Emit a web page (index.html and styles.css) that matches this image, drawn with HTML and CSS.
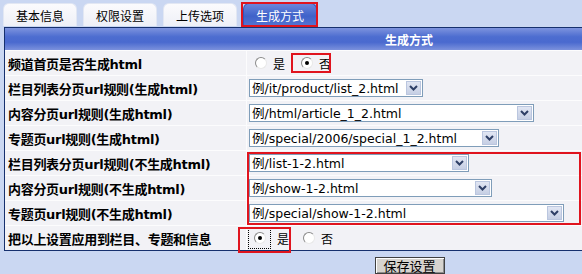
FILE: index.html
```html
<!DOCTYPE html>
<html lang="zh-cn">
<head>
    <meta charset="UTF-8">
    <title>生成方式</title>
    <link rel="stylesheet" href="styles.css">
</head>
<body>
    <div class="page">
        <ul class="tabs">
            <li>基本信息</li>
            <li>权限设置</li>
            <li>上传选项</li>
            <li class="on">生成方式</li>
        </ul>
        <table class="form">
            <tr class="head"><th colspan="2">生成方式</th></tr>
            <tr>
                <td class="lbl">频道首页是否生成html</td>
                <td class="val">
                    <span class="radios">
                        <label><input type="radio" name="idx"> 是</label>
                        <label><input type="radio" name="idx" checked> 否</label>
                    </span>
                </td>
            </tr>
            <tr>
                <td class="lbl">栏目列表分页url规则(生成html)</td>
                <td class="val"><span class="sel w174"><select><option>例/it/product/list_2.html</option></select><i class="arrow"><svg width="15" height="14" viewBox="0 0 15 14"><polyline points="4,5 7.5,8.5 11,5" fill="none" stroke="#2e3f66" stroke-width="2"/></svg></i></span></td>
            </tr>
            <tr>
                <td class="lbl">内容分页url规则(生成html)</td>
                <td class="val"><span class="sel w285"><select><option>例/html/article_1_2.html</option></select><i class="arrow"><svg width="15" height="14" viewBox="0 0 15 14"><polyline points="4,5 7.5,8.5 11,5" fill="none" stroke="#2e3f66" stroke-width="2"/></svg></i></span></td>
            </tr>
            <tr>
                <td class="lbl">专题页url规则(生成html)</td>
                <td class="val"><span class="sel w250"><select><option>例/special/2006/special_1_2.html</option></select><i class="arrow"><svg width="15" height="14" viewBox="0 0 15 14"><polyline points="4,5 7.5,8.5 11,5" fill="none" stroke="#2e3f66" stroke-width="2"/></svg></i></span></td>
            </tr>
            <tr>
                <td class="lbl">栏目列表分页url规则(不生成html)</td>
                <td class="val"><span class="sel w220"><select><option>例/list-1-2.html</option></select><i class="arrow"><svg width="15" height="14" viewBox="0 0 15 14"><polyline points="4,5 7.5,8.5 11,5" fill="none" stroke="#2e3f66" stroke-width="2"/></svg></i></span></td>
            </tr>
            <tr>
                <td class="lbl">内容分页url规则(不生成html)</td>
                <td class="val"><span class="sel w243"><select><option>例/show-1-2.html</option></select><i class="arrow"><svg width="15" height="14" viewBox="0 0 15 14"><polyline points="4,5 7.5,8.5 11,5" fill="none" stroke="#2e3f66" stroke-width="2"/></svg></i></span></td>
            </tr>
            <tr>
                <td class="lbl">专题页url规则(不生成html)</td>
                <td class="val"><span class="sel w315"><select><option>例/special/show-1-2.html</option></select><i class="arrow"><svg width="15" height="14" viewBox="0 0 15 14"><polyline points="4,5 7.5,8.5 11,5" fill="none" stroke="#2e3f66" stroke-width="2"/></svg></i></span></td>
            </tr>
            <tr>
                <td class="lbl">把以上设置应用到栏目、专题和信息</td>
                <td class="val">
                    <span class="radios apply">
                        <label><span class="focus"><input type="radio" name="apply" checked></span> 是</label>
                        <label><input type="radio" name="apply"> 否</label>
                    </span>
                </td>
            </tr>
        </table>
        <div class="actions"><button type="button" class="btn-save">保存设置</button></div>

        <!-- 标注框 -->
        <div class="mark mark-tab"></div>
        <div class="mark mark-no"></div>
        <div class="mark mark-rules"></div>
        <div class="mark mark-yes"></div>
    </div>
</body>
</html>
```

FILE: styles.css
```css
body {
    margin: 0;
    background: #cad7f2;
    overflow: hidden;
    font-family: "DejaVu Sans", "Noto Sans CJK SC", sans-serif;
    font-size: 12px;
    color: #000;
}
.page {
    position: relative;
    width: 811px;
    padding: 3px 0 0 4px;
}
.tabs {
    display: flex;
    gap: 6px;
    list-style: none;
    margin: 0 0 0 -1px;
    padding: 0;
    height: 24px;
}
.tabs li {
    width: 74px;
    height: 23px;
    box-sizing: border-box;
    display: flex;
    align-items: center;
    justify-content: center;
    background: linear-gradient(#fbfbfd, #eef0f7);
    border: 1px solid #e2e7f3;
    border-bottom: none;
    border-radius: 6px 6px 0 0;
    font-family: "Noto Sans CJK SC", sans-serif;
    font-size: 12px;
}
.tabs li.on {
    background: linear-gradient(#6a86dc, #3f62c9 55%, #5474d2);
    border-color: #3554b8;
    color: #fff;
}
.form {
    width: 810px;
    border: 1px solid #16306e;
    border-collapse: separate;
    border-spacing: 0;
    background: #f2f2f6;
}
.form .head th {
    height: 22px;
    padding: 0;
    background: linear-gradient(#7d93de, #4d6dd0 40%, #4a6acf 65%, #7b91dc);
    color: #fff;
    font-family: "Noto Sans CJK SC", sans-serif;
    font-size: 12px;
    font-weight: bold;
    text-align: center;
}
.form td {
    height: 24px;
    padding: 0;
    border-top: 1px solid #fcfcfd;
    vertical-align: middle;
}
.form td.lbl {
    width: 238px;
    padding-left: 3px;
    border-right: 1px solid #fcfcfd;
    font-weight: bold;
    font-size: 13px;
    font-family: "DejaVu Sans", "Noto Sans CJK SC", sans-serif;
    letter-spacing: -0.3px;
}
.form td.val {
    padding-left: 2px;
}
.sel {
    display: inline-flex;
    align-items: center;
    height: 18px;
    box-sizing: border-box;
    border: 1px solid #7f9db9;
    background: #fff;
    vertical-align: middle;
}
.sel select {
    appearance: none;
    flex: 1;
    min-width: 0;
    border: none;
    background: transparent;
    padding: 0 0 0 2px;
    font-family: "DejaVu Sans", "Noto Sans CJK SC", sans-serif;
    font-size: 12.5px;
    color: #000;
    outline: none;
}
.sel .arrow {
    display: block;
    width: 15px;
    height: 14px;
    margin: 0 1px;
    background: linear-gradient(#e1e6f3, #c6cfe4);
    border: 1px solid #bac6df;
    box-sizing: border-box;
}
.sel .arrow svg {
    display: block;
    margin: -1px 0 0 -1px;
}
.w174 { width: 174px; }
.w285 { width: 285px; }
.w250 { width: 250px; }
.w220 { width: 220px; }
.w243 { width: 243px; }
.w315 { width: 315px; }
.radios {
    display: inline-flex;
    align-items: center;
    gap: 12px;
    margin-left: 4px;
    font-family: "Noto Sans CJK SC", sans-serif;
    font-size: 12px;
    vertical-align: middle;
}
.radios label {
    display: inline-flex;
    align-items: center;
    gap: 6px;
    padding: 0 2px;
}
.radios input {
    appearance: none;
    width: 12px;
    height: 12px;
    margin: 0;
    border-radius: 50%;
    border: 1px solid;
    border-color: #8a8a8a #e8e8e8 #e8e8e8 #8a8a8a;
    background: #fff;
    box-sizing: border-box;
    display: grid;
    place-items: center;
}
.radios input:checked::after {
    content: "";
    width: 4px;
    height: 4px;
    border-radius: 50%;
    background: #000;
}
.radios.apply {
    margin-left: -1px;
}
.radios.apply label:first-child {
    padding: 0;
}
.radios .focus {
    display: inline-flex;
    align-items: center;
    height: 22px;
    padding: 0 4px 0 5px;
    box-sizing: border-box;
    border: 1px dotted #000;
}
.actions {
    text-align: center;
    padding-top: 6px;
}
.btn-save {
    width: 70px;
    height: 17px;
    padding: 0;
    background: #d6d3ce;
    border: 1px solid #404040;
    box-shadow: inset 1px 1px #fff, inset -1px -1px #8c8c8c;
    font-family: "Noto Sans CJK SC", sans-serif;
    font-size: 13px;
    line-height: 14px;
}
.mark {
    position: absolute;
    border: 2px solid #e0141e;
    box-sizing: border-box;
}
.mark-tab { left: 241px; top: 2px; width: 77px; height: 25px; }
.mark-no { left: 291px; top: 53px; width: 40px; height: 20px; }
.mark-rules { left: 247px; top: 152px; width: 334px; height: 73px; }
.mark-yes { left: 238px; top: 227px; width: 53px; height: 26px; }
```
